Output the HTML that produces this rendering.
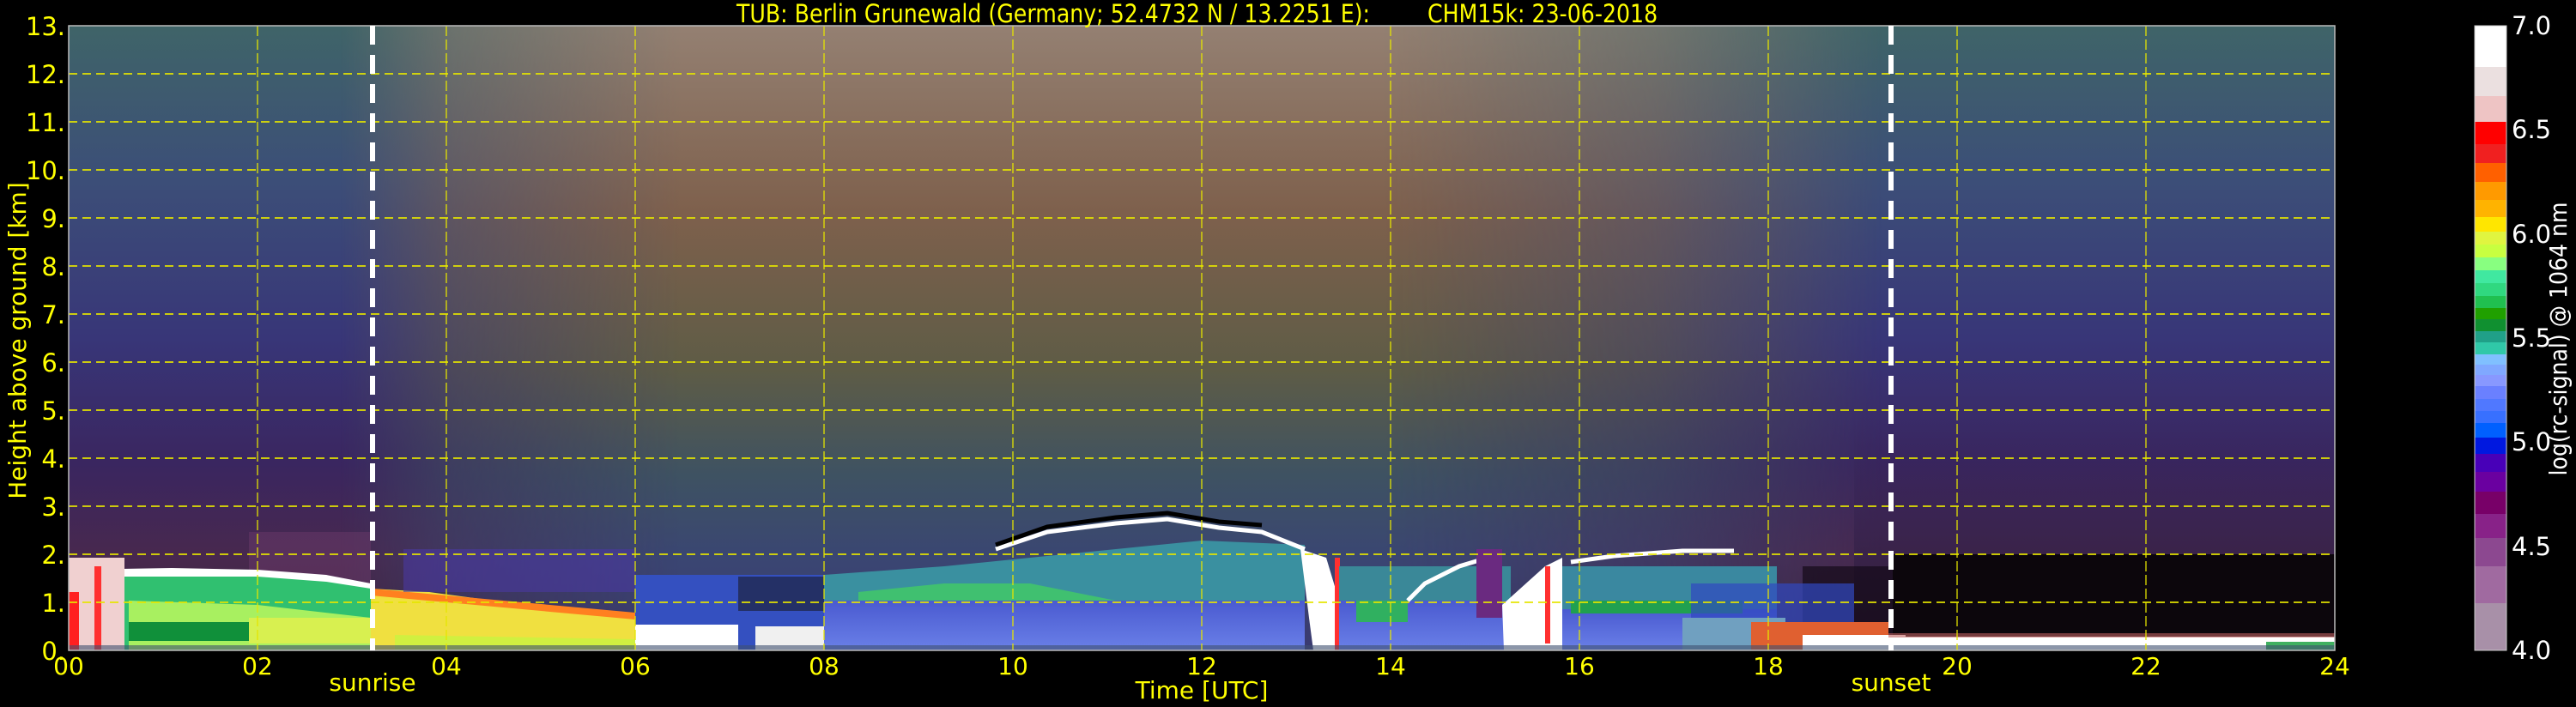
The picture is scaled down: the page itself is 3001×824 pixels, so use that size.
<!DOCTYPE html>
<html><head><meta charset="utf-8"><style>
html,body{margin:0;padding:0;background:#000;width:3001px;height:824px;overflow:hidden}
svg{display:block}
text{font-family:"DejaVu Sans","Liberation Sans",sans-serif;fill:#ffff00}
</style></head><body>
<svg width="3001" height="824" viewBox="0 0 3001 824" xmlns="http://www.w3.org/2000/svg">
<defs>
<linearGradient id="night" x1="0" y1="0" x2="0" y2="1">
<stop offset="0" stop-color="#3f6468"/>
<stop offset="0.25" stop-color="#3c4e78"/>
<stop offset="0.5" stop-color="#383678"/>
<stop offset="0.7" stop-color="#3a2660"/>
<stop offset="0.85" stop-color="#48284e"/>
<stop offset="1" stop-color="#3a2438"/>
</linearGradient>
<linearGradient id="day" x1="0" y1="0" x2="0" y2="1">
<stop offset="0" stop-color="#948072"/>
<stop offset="0.3" stop-color="#7e604c"/>
<stop offset="0.55" stop-color="#5e5c46"/>
<stop offset="0.72" stop-color="#3e5262"/>
<stop offset="0.85" stop-color="#3a4672"/>
<stop offset="1" stop-color="#3a3a70"/>
</linearGradient>
<linearGradient id="dmask" x1="80" y1="0" x2="2720" y2="0" gradientUnits="userSpaceOnUse">
<stop offset="0" stop-color="#000"/>
<stop offset="0.12" stop-color="#000"/>
<stop offset="0.17" stop-color="#888"/>
<stop offset="0.27" stop-color="#fff"/>
<stop offset="0.58" stop-color="#fff"/>
<stop offset="0.7" stop-color="#999"/>
<stop offset="0.8" stop-color="#000"/>
<stop offset="1" stop-color="#000"/>
</linearGradient>
<mask id="dm"><rect x="80" y="30" width="2640" height="728" fill="url(#dmask)"/></mask>
<linearGradient id="eve" x1="0" y1="0" x2="0" y2="1">
<stop offset="0" stop-color="#35245a" stop-opacity="0"/>
<stop offset="0.5" stop-color="#30204a" stop-opacity="0.5"/>
<stop offset="1" stop-color="#2a1830" stop-opacity="0.9"/>
</linearGradient>
<linearGradient id="blue" x1="0" y1="0" x2="0" y2="1">
<stop offset="0" stop-color="#4a5ad0"/>
<stop offset="1" stop-color="#6a80e8"/>
</linearGradient>
</defs>

<rect x="80" y="30" width="2640" height="728" fill="url(#night)"/>
<rect x="80" y="30" width="2640" height="728" fill="url(#day)" mask="url(#dm)"/>
<rect x="2160" y="480" width="560" height="278" fill="url(#eve)"/>
<rect x="2205" y="646" width="515" height="112" fill="#0c060c"/>
<rect x="2100" y="660" width="105" height="98" fill="#140a18" opacity="0.7"/>
<rect x="290" y="620" width="142" height="60" fill="#6a3a6a" opacity="0.5"/>

<polygon points="80,758 80,664 150,664 200,666 300,666 380,672 432,682 432,758" fill="#30c070"/>
<polygon points="80,664 200,662 300,664 380,670 432,680 432,686 380,678 300,672 200,672 80,672" fill="#ffffff"/>
<polygon points="150,758 150,700 300,705 432,720 432,758" fill="#a8f060"/>
<rect x="150" y="725" width="150" height="22" fill="#10903a"/>
<rect x="290" y="720" width="142" height="30" fill="#d8f050"/>
<rect x="80" y="650" width="65" height="108" fill="#f0d0d0"/>
<rect x="80" y="690" width="12" height="68" fill="#ff2020"/>
<rect x="110" y="660" width="8" height="98" fill="#ff3030"/>
<polygon points="432,758 432,686 500,690 560,698 620,704 700,712 740,716 740,758" fill="#f0e040"/>
<polygon points="432,686 740,714 740,722 432,694" fill="#ff8020"/>
<polygon points="460,740 740,745 740,758 460,758" fill="#d0f040"/>
<rect x="470" y="640" width="270" height="50" fill="#4a38a0" opacity="0.6"/>
<rect x="740" y="670" width="220" height="88" fill="#3450c0"/>
<rect x="740" y="728" width="120" height="30" fill="#ffffff"/>
<rect x="880" y="730" width="80" height="28" fill="#f0f0f0"/>
<rect x="860" y="672" width="100" height="40" fill="#1a1a2a" opacity="0.6"/>
<rect x="960" y="700" width="560" height="58" fill="url(#blue)"/>
<polygon points="960,700 960,670 1100,660 1200,650 1300,640 1400,630 1520,635 1520,700" fill="#3a90a0"/>
<polygon points="1000,690 1100,680 1200,680 1300,700 1000,700" fill="#40c070"/>
<polyline points="1160,640 1220,620 1300,610 1360,605 1420,615 1470,620 1520,640" fill="none" stroke="#ffffff" stroke-width="5"/>
<polyline points="1160,635 1220,614 1300,603 1360,598 1420,608 1470,612" fill="none" stroke="#000" stroke-width="5"/>
<polygon points="1515,640 1545,650 1560,700 1560,758 1530,758 1525,720" fill="#ffffff"/>
<rect x="1555" y="650" width="6" height="108" fill="#ff3030"/>
<rect x="1560" y="700" width="200" height="58" fill="url(#blue)"/>
<rect x="1560" y="660" width="200" height="40" fill="#3a8898"/>
<rect x="1580" y="700" width="60" height="25" fill="#30b060"/>
<polyline points="1640,700 1660,680 1700,660 1740,648" fill="none" stroke="#ffffff" stroke-width="5"/>
<polygon points="1750,705 1800,660 1820,650 1820,758 1752,758" fill="#ffffff"/>
<rect x="1800" y="660" width="6" height="90" fill="#ff3030"/>
<rect x="1720" y="640" width="30" height="80" fill="#6a2a80"/>
<rect x="1820" y="710" width="250" height="48" fill="url(#blue)"/>
<rect x="1820" y="660" width="250" height="50" fill="#3a88a0"/>
<rect x="1830" y="700" width="200" height="15" fill="#20a050"/>
<polyline points="1830,655 1880,648 1960,642 2020,642" fill="none" stroke="#ffffff" stroke-width="5"/>
<rect x="1970" y="680" width="190" height="60" fill="#3048c0" opacity="0.7"/>
<rect x="1960" y="720" width="120" height="38" fill="#70a0c0"/>
<rect x="2040" y="725" width="160" height="33" fill="#e06030"/>
<rect x="2100" y="740" width="120" height="18" fill="#ffffff"/>
<rect x="2200" y="742" width="520" height="16" fill="#ffffff"/>
<rect x="2200" y="738" width="520" height="5" fill="#c06060" opacity="0.6"/>
<rect x="2640" y="748" width="80" height="10" fill="#40b060"/>
<rect x="80" y="752" width="2640" height="6" fill="#405070" opacity="0.6"/>

<g stroke="#e6e600" stroke-width="2" stroke-dasharray="10,6" opacity="0.85">
<line x1="80" y1="702" x2="2720" y2="702"/><line x1="80" y1="646" x2="2720" y2="646"/>
<line x1="80" y1="590" x2="2720" y2="590"/><line x1="80" y1="534" x2="2720" y2="534"/>
<line x1="80" y1="478" x2="2720" y2="478"/><line x1="80" y1="422" x2="2720" y2="422"/>
<line x1="80" y1="366" x2="2720" y2="366"/><line x1="80" y1="310" x2="2720" y2="310"/>
<line x1="80" y1="254" x2="2720" y2="254"/><line x1="80" y1="198" x2="2720" y2="198"/>
<line x1="80" y1="142" x2="2720" y2="142"/><line x1="80" y1="86" x2="2720" y2="86"/>
</g>
<g stroke="#e6e600" stroke-width="1.5" stroke-dasharray="12,4" opacity="0.85">
<line x1="300" y1="30" x2="300" y2="758"/><line x1="520" y1="30" x2="520" y2="758"/>
<line x1="740" y1="30" x2="740" y2="758"/><line x1="960" y1="30" x2="960" y2="758"/>
<line x1="1180" y1="30" x2="1180" y2="758"/><line x1="1400" y1="30" x2="1400" y2="758"/>
<line x1="1620" y1="30" x2="1620" y2="758"/><line x1="1840" y1="30" x2="1840" y2="758"/>
<line x1="2060" y1="30" x2="2060" y2="758"/><line x1="2280" y1="30" x2="2280" y2="758"/>
<line x1="2500" y1="30" x2="2500" y2="758"/>
</g>
<rect x="80" y="30" width="2640" height="728" fill="none" stroke="#bbb" stroke-width="1.5"/>
<line x1="434" y1="30" x2="434" y2="758" stroke="#fff" stroke-width="6" stroke-dasharray="22,12"/>
<line x1="2203" y1="30" x2="2203" y2="758" stroke="#fff" stroke-width="6" stroke-dasharray="22,12"/>

<text transform="translate(858,26) scale(0.87,1)" font-size="29">TUB: Berlin Grunewald (Germany; 52.4732 N / 13.2251 E):</text>
<text transform="translate(1663,26) scale(0.87,1)" font-size="29">CHM15k: 23-06-2018</text>

<g font-size="29" text-anchor="end">
<text x="76" y="769">0.</text><text x="76" y="713">1.</text><text x="76" y="657">2.</text>
<text x="76" y="601">3.</text><text x="76" y="545">4.</text><text x="76" y="489">5.</text>
<text x="76" y="433">6.</text><text x="76" y="377">7.</text><text x="76" y="321">8.</text>
<text x="76" y="265">9.</text><text x="76" y="209">10.</text><text x="76" y="153">11.</text>
<text x="76" y="97">12.</text><text x="76" y="41">13.</text>
</g>
<text transform="translate(30,397) rotate(-90)" font-size="28" text-anchor="middle">Height above ground [km]</text>

<g font-size="28" text-anchor="middle">
<text x="80" y="786">00</text><text x="300" y="786">02</text><text x="520" y="786">04</text>
<text x="740" y="786">06</text><text x="960" y="786">08</text><text x="1180" y="786">10</text>
<text x="1400" y="786">12</text><text x="1620" y="786">14</text><text x="1840" y="786">16</text>
<text x="2060" y="786">18</text><text x="2280" y="786">20</text><text x="2500" y="786">22</text>
<text x="2720" y="786">24</text>
</g>
<text x="434" y="805" font-size="28" text-anchor="middle">sunrise</text>
<text x="2203" y="805" font-size="28" text-anchor="middle">sunset</text>
<text x="1400" y="814" font-size="28" text-anchor="middle">Time [UTC]</text>

<g>
<rect x="2883" y="30" width="37" height="48" fill="#ffffff"/>
<rect x="2883" y="78" width="37" height="34" fill="#ebe0e0"/>
<rect x="2883" y="112" width="37" height="30" fill="#eec4c4"/>
<rect x="2883" y="142" width="37" height="26" fill="#ff0000"/>
<rect x="2883" y="168" width="37" height="22" fill="#f02020"/>
<rect x="2883" y="190" width="37" height="22" fill="#ff6000"/>
<rect x="2883" y="212" width="37" height="21" fill="#ff9a00"/>
<rect x="2883" y="233" width="37" height="20" fill="#ffb300"/>
<rect x="2883" y="253" width="37" height="17" fill="#ffe600"/>
<rect x="2883" y="270" width="37" height="15" fill="#e0f540"/>
<rect x="2883" y="285" width="37" height="15" fill="#c8ff40"/>
<rect x="2883" y="300" width="37" height="15" fill="#88ff80"/>
<rect x="2883" y="315" width="37" height="15" fill="#40e8a0"/>
<rect x="2883" y="330" width="37" height="15" fill="#30d880"/>
<rect x="2883" y="345" width="37" height="14" fill="#20c050"/>
<rect x="2883" y="359" width="37" height="13" fill="#20a000"/>
<rect x="2883" y="372" width="37" height="14" fill="#109030"/>
<rect x="2883" y="386" width="37" height="13" fill="#20a088"/>
<rect x="2883" y="399" width="37" height="14" fill="#30c8a8"/>
<rect x="2883" y="413" width="37" height="12" fill="#80c0ff"/>
<rect x="2883" y="425" width="37" height="12" fill="#80a8ff"/>
<rect x="2883" y="437" width="37" height="13" fill="#8898ff"/>
<rect x="2883" y="450" width="37" height="15" fill="#6a80ff"/>
<rect x="2883" y="465" width="37" height="14" fill="#5078ff"/>
<rect x="2883" y="479" width="37" height="14" fill="#3870ff"/>
<rect x="2883" y="493" width="37" height="17" fill="#0060ff"/>
<rect x="2883" y="510" width="37" height="19" fill="#0018e0"/>
<rect x="2883" y="529" width="37" height="21" fill="#4800b8"/>
<rect x="2883" y="550" width="37" height="23" fill="#6a00a0"/>
<rect x="2883" y="573" width="37" height="26" fill="#780068"/>
<rect x="2883" y="599" width="37" height="28" fill="#882288"/>
<rect x="2883" y="627" width="37" height="33" fill="#8c4890"/>
<rect x="2883" y="660" width="37" height="43" fill="#a06aa0"/>
<rect x="2883" y="703" width="37" height="55" fill="#a890a8"/>
<rect x="2883" y="30" width="37" height="728" fill="none" stroke="#ccc" stroke-width="1"/>
</g>
<g font-size="29">
<text x="2926" y="40" style="fill:#fff">7.0</text>
<text x="2926" y="161" style="fill:#fff">6.5</text>
<text x="2926" y="283" style="fill:#fff">6.0</text>
<text x="2926" y="404" style="fill:#fff">5.5</text>
<text x="2926" y="525" style="fill:#fff">5.0</text>
<text x="2926" y="647" style="fill:#fff">4.5</text>
<text x="2926" y="768" style="fill:#fff">4.0</text>
</g>
<text transform="translate(2990,395) rotate(-90) scale(0.9,1)" font-size="28" text-anchor="middle" style="fill:#fff">log(rc-signal) @ 1064 nm</text>
</svg>
</body></html>
